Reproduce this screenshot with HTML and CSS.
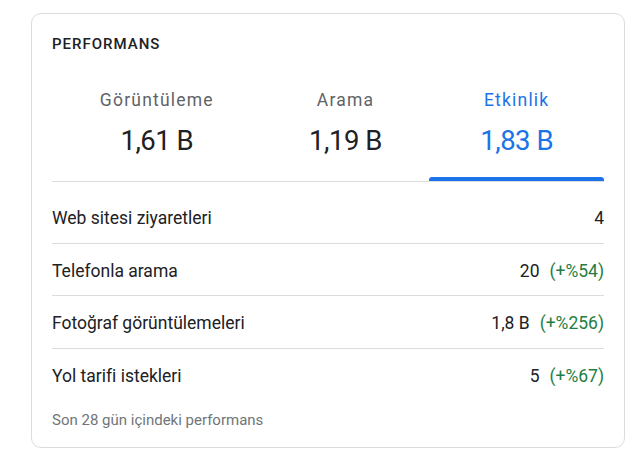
FILE: index.html
```html
<!DOCTYPE html>
<html lang="tr">
<head>
<meta charset="utf-8">
<title>Performans</title>
<link rel="stylesheet" href="styles.css">
</head>
<body>
<div class="page">
  <section class="card">
    <h2 class="title">PERFORMANS</h2>
    <div class="tabs">
      <div class="tab">
        <div class="tab-label">Görüntüleme</div>
        <div class="tab-value">1,61 B</div>
      </div>
      <div class="tab">
        <div class="tab-label">Arama</div>
        <div class="tab-value">1,19 B</div>
      </div>
      <div class="tab active">
        <div class="tab-label">Etkinlik</div>
        <div class="tab-value">1,83 B</div>
      </div>
    </div>
    <ul class="rows">
      <li class="row"><span class="row-label">Web sitesi ziyaretleri</span><span class="row-value">4</span></li>
      <li class="row"><span class="row-label">Telefonla arama</span><span class="row-value">20<span class="change">(+%54)</span></span></li>
      <li class="row"><span class="row-label">Fotoğraf görüntülemeleri</span><span class="row-value">1,8 B<span class="change">(+%256)</span></span></li>
      <li class="row"><span class="row-label">Yol tarifi istekleri</span><span class="row-value">5<span class="change">(+%67)</span></span></li>
    </ul>
    <p class="footer">Son 28 gün içindeki performans</p>
  </section>
</div>
</body>
</html>
```

FILE: styles.css
```css
* { box-sizing: border-box; }

html, body {
  margin: 0;
  padding: 0;
  background: #ffffff;
}

body {
  font-family: Roboto, "Liberation Sans", Arial, sans-serif;
  color: #202124;
}

.page {
  padding: 13px 0 0 31px;
}

.card {
  width: 594px;
  height: 435px;
  border: 1px solid #dadce0;
  border-radius: 10px;
  padding: 20px 20px 20px 20px;
  display: flex;
  flex-direction: column;
}

.title {
  margin: 0;
  font-size: 15px;
  line-height: 20px;
  font-weight: 500;
  letter-spacing: 1px;
  color: #202124;
}

.tabs {
  display: grid;
  grid-template-columns: 1.2fr 0.96fr 1fr;
  margin-top: 34px;
  border-bottom: 1px solid #dadce0;
}

.tab {
  position: relative;
  text-align: center;
  padding-bottom: 22px;
}

.tab-label {
  font-size: 17.5px;
  line-height: 24px;
  letter-spacing: 1.2px;
  color: #5f6368;
}

.tab-value {
  margin-top: 11px;
  font-size: 27.5px;
  line-height: 36px;
  letter-spacing: -0.5px;
  color: #202124;
}

.tab.active .tab-label,
.tab.active .tab-value {
  color: #1a73e8;
}

.tab.active::after {
  content: "";
  position: absolute;
  left: 0;
  right: 0;
  bottom: 0;
  height: 4px;
  background: #1a73e8;
  border-radius: 3px 3px 0 0;
}

.rows {
  list-style: none;
  margin: 0;
  padding: 9px 0 0 0;
}

.row {
  display: flex;
  justify-content: space-between;
  align-items: baseline;
  padding: 16px 0 12px 0;
  font-size: 17.5px;
  line-height: 23.5px;
  border-bottom: 1px solid #dadce0;
}

.row:last-child {
  border-bottom: none;
}

.row-value {
  color: #202124;
}

.change {
  margin-left: 10px;
  color: #1e7e45;
}

.footer {
  margin: 10px 0 0 0;
  font-size: 15px;
  line-height: 20px;
  color: #70757a;
}
```
